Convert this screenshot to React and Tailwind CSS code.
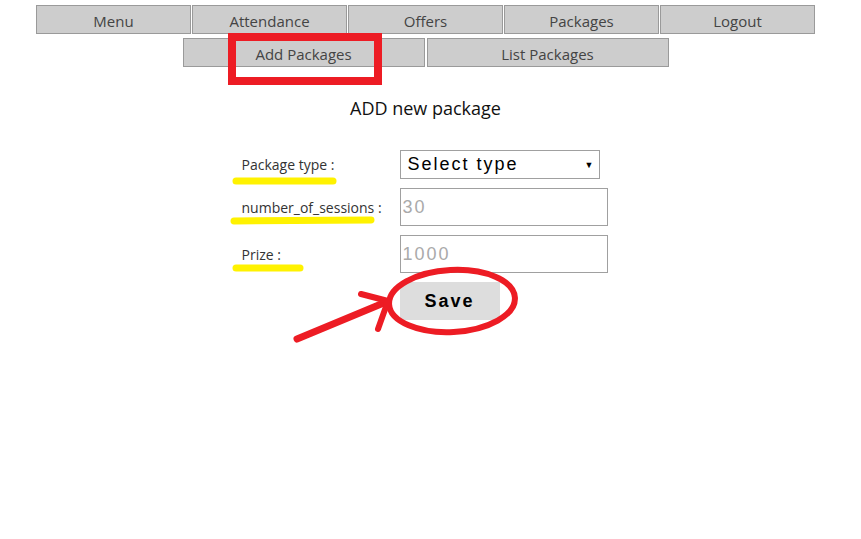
import React from 'react';

const navTop = ['Menu', 'Attendance', 'Offers', 'Packages', 'Logout'];
const navSub = ['Add Packages', 'List Packages'];

function NavButton({ label, wide }) {
  return (
    <button
      className={`${wide ? 'w-[242px]' : 'w-[155px]'} h-[29px] border border-[#9a9a9a] bg-[#cdcdcd] text-[#444] text-[15px] leading-none pt-[3px] font-['Open_Sans','Noto_Sans',sans-serif]`}
    >
      {label}
    </button>
  );
}

// red / yellow marker strokes drawn on top of the page
function Annotations() {
  return (
    <svg className="absolute inset-0 pointer-events-none" width="861" height="539" viewBox="0 0 861 539">
      <rect x="232" y="37" width="146" height="44" fill="none" stroke="#ed1c24" strokeWidth="8" />
      <g stroke="#fff200" strokeWidth="7" strokeLinecap="round" fill="none">
        <path d="M236 181 L333 181" />
        <path d="M234 221 L371 220" />
        <path d="M236 268 L300 268" />
      </g>
      <g stroke="#ed1c24" strokeLinecap="round" strokeLinejoin="round" fill="none">
        <ellipse cx="452" cy="301" rx="63" ry="31" strokeWidth="6" transform="rotate(-3 452 301)" />
        <path d="M297 339 L386 302" strokeWidth="7" />
        <path d="M361 294 L388 301 L378 329" strokeWidth="6" />
      </g>
    </svg>
  );
}

const labelCls = "text-[14px] text-[#333] font-['Open_Sans','Noto_Sans',sans-serif]";
const fieldCls =
  "w-[208px] h-[38px] border border-[#a0a0a0] pl-[2px] text-[18px] tracking-[2px] placeholder:text-[#aaa] outline-none font-['Liberation_Sans',Arial,sans-serif]";

export default function App() {
  return (
    <div className="relative w-[861px] h-[539px] bg-white overflow-hidden">
      <div className="w-[851px]">
        {/* Nav */}
        <div className="flex justify-center gap-px pt-[5px]">
          {navTop.map((n) => <NavButton key={n} label={n} />)}
        </div>
        <div className="flex justify-center gap-[2px] mt-[4px]">
          {navSub.map((n) => <NavButton key={n} label={n} wide />)}
        </div>

        <h2 className="text-center text-[18px] text-[#111] mt-[32px] leading-none font-['Open_Sans','Noto_Sans',sans-serif]">
          ADD new package
        </h2>

        {/* Form */}
        <form className="w-[368px] mx-auto mt-[33px] grid grid-cols-[158px_auto] items-center gap-y-[9px]">
          <label className={labelCls}>Package type :</label>
          <div className="relative w-[200px]">
            <select
              className="appearance-none w-[200px] h-[29px] border border-[#a0a0a0] bg-white pl-[7px] text-[18px] tracking-[2px] text-black outline-none font-['Liberation_Sans',Arial,sans-serif]"
              defaultValue=""
            >
              <option value="">Select type</option>
            </select>
            <span className="absolute right-[6px] top-[8px] text-[9px] text-black pointer-events-none">▼</span>
          </div>

          <label className={labelCls}>number_of_sessions :</label>
          <input className={fieldCls} placeholder="30" />

          <label className={labelCls}>Prize :</label>
          <input className={fieldCls} placeholder="1000" />

          <div />
          <button
            type="button"
            className="w-[100px] h-[38px] bg-[#dddddd] text-[18px] font-bold tracking-[2px] text-black font-['Liberation_Sans',Arial,sans-serif]"
          >
            Save
          </button>
        </form>
      </div>

      <Annotations />
    </div>
  );
}
